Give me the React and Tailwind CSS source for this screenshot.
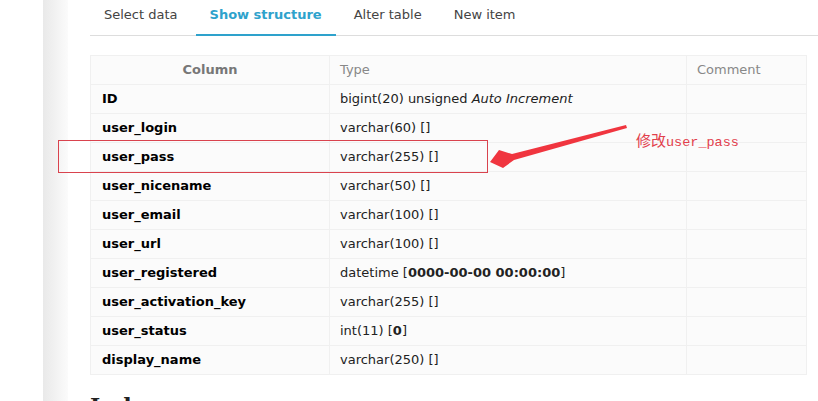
const rows = [
  { name: 'ID', type: <>bigint(20) unsigned <i>Auto Increment</i></> },
  { name: 'user_login', type: 'varchar(60) []' },
  { name: 'user_pass', type: 'varchar(255) []' },
  { name: 'user_nicename', type: 'varchar(50) []' },
  { name: 'user_email', type: 'varchar(100) []' },
  { name: 'user_url', type: 'varchar(100) []' },
  { name: 'user_registered', type: <>datetime [<b>0000-00-00 00:00:00</b>]</> },
  { name: 'user_activation_key', type: 'varchar(255) []' },
  { name: 'user_status', type: <>int(11) [<b>0</b>]</> },
  { name: 'display_name', type: 'varchar(250) []' },
];

const tabs = ['Select data', 'Show structure', 'Alter table', 'New item'];

export default function App() {
  return (
    <div className="relative w-[818px] h-[401px] overflow-hidden bg-white text-[13px] text-[#222] font-['DejaVu_Sans',Verdana,sans-serif] flex">
      <div className="w-[43px] shrink-0 bg-white" />
      <div className="w-[25px] shrink-0 bg-gradient-to-r from-[#e9e9e9] to-[#fbfbfb]" />
      <div className="flex-1 pl-[22px]">
        <div className="flex gap-[4px] border-b border-[#dddddd] h-[36px]">
          {tabs.map((t, i) => (
            <div
              key={t}
              className={
                'px-[14px] pt-[5px] h-[36px] ' +
                (i === 1 ? 'text-[#2ea2cc] font-bold border-b-2 border-[#2ea2cc]' : 'text-[#444]')
              }
            >
              {t}
            </div>
          ))}
        </div>
        <table className="mt-[19px] w-[716px] border-collapse bg-[#fbfbfb] table-fixed">
          <colgroup>
            <col className="w-[239px]" />
            <col className="w-[357px]" />
            <col className="w-[120px]" />
          </colgroup>
          <thead>
            <tr className="h-[29px] border border-[#f0f0f0]">
              <th className="text-center font-bold text-[#777] border-r border-[#f0f0f0]">Column</th>
              <th className="text-left font-normal text-[#888] pl-[10px] border-r border-[#f0f0f0]">Type</th>
              <th className="text-left font-normal text-[#888] pl-[10px]">Comment</th>
            </tr>
          </thead>
          <tbody>
            {rows.map((r) => (
              <tr key={r.name} className="h-[29px] border border-[#f0f0f0]">
                <td className="pl-[11px] font-bold text-black border-r border-[#f0f0f0]">{r.name}</td>
                <td className="pl-[10px] text-[#222] border-r border-[#f0f0f0]">{r.type}</td>
                <td />
              </tr>
            ))}
          </tbody>
        </table>
        <h3 className="mt-[15px] text-[22px] font-bold font-['DejaVu_Serif',serif] text-[#222]">Indexes</h3>
      </div>

      <div className="absolute left-[58px] top-[140px] w-[430px] h-[33px] border border-[#d9434e]" />
      <svg className="absolute left-0 top-0" width="818" height="401">
        <polygon
          points="626,125 512,154 499,150 490,162 503,168 514,160 627,128"
          fill="#f0353f"
        />
      </svg>
      <div className="absolute left-[636px] top-[129px] text-[#e2404c] flex items-baseline">
        <span className="text-[15px] font-['Noto_Sans_CJK_SC',serif]">修改</span>
        <span className="text-[13.5px] font-['Liberation_Mono',monospace]">user_pass</span>
      </div>
    </div>
  );
}
